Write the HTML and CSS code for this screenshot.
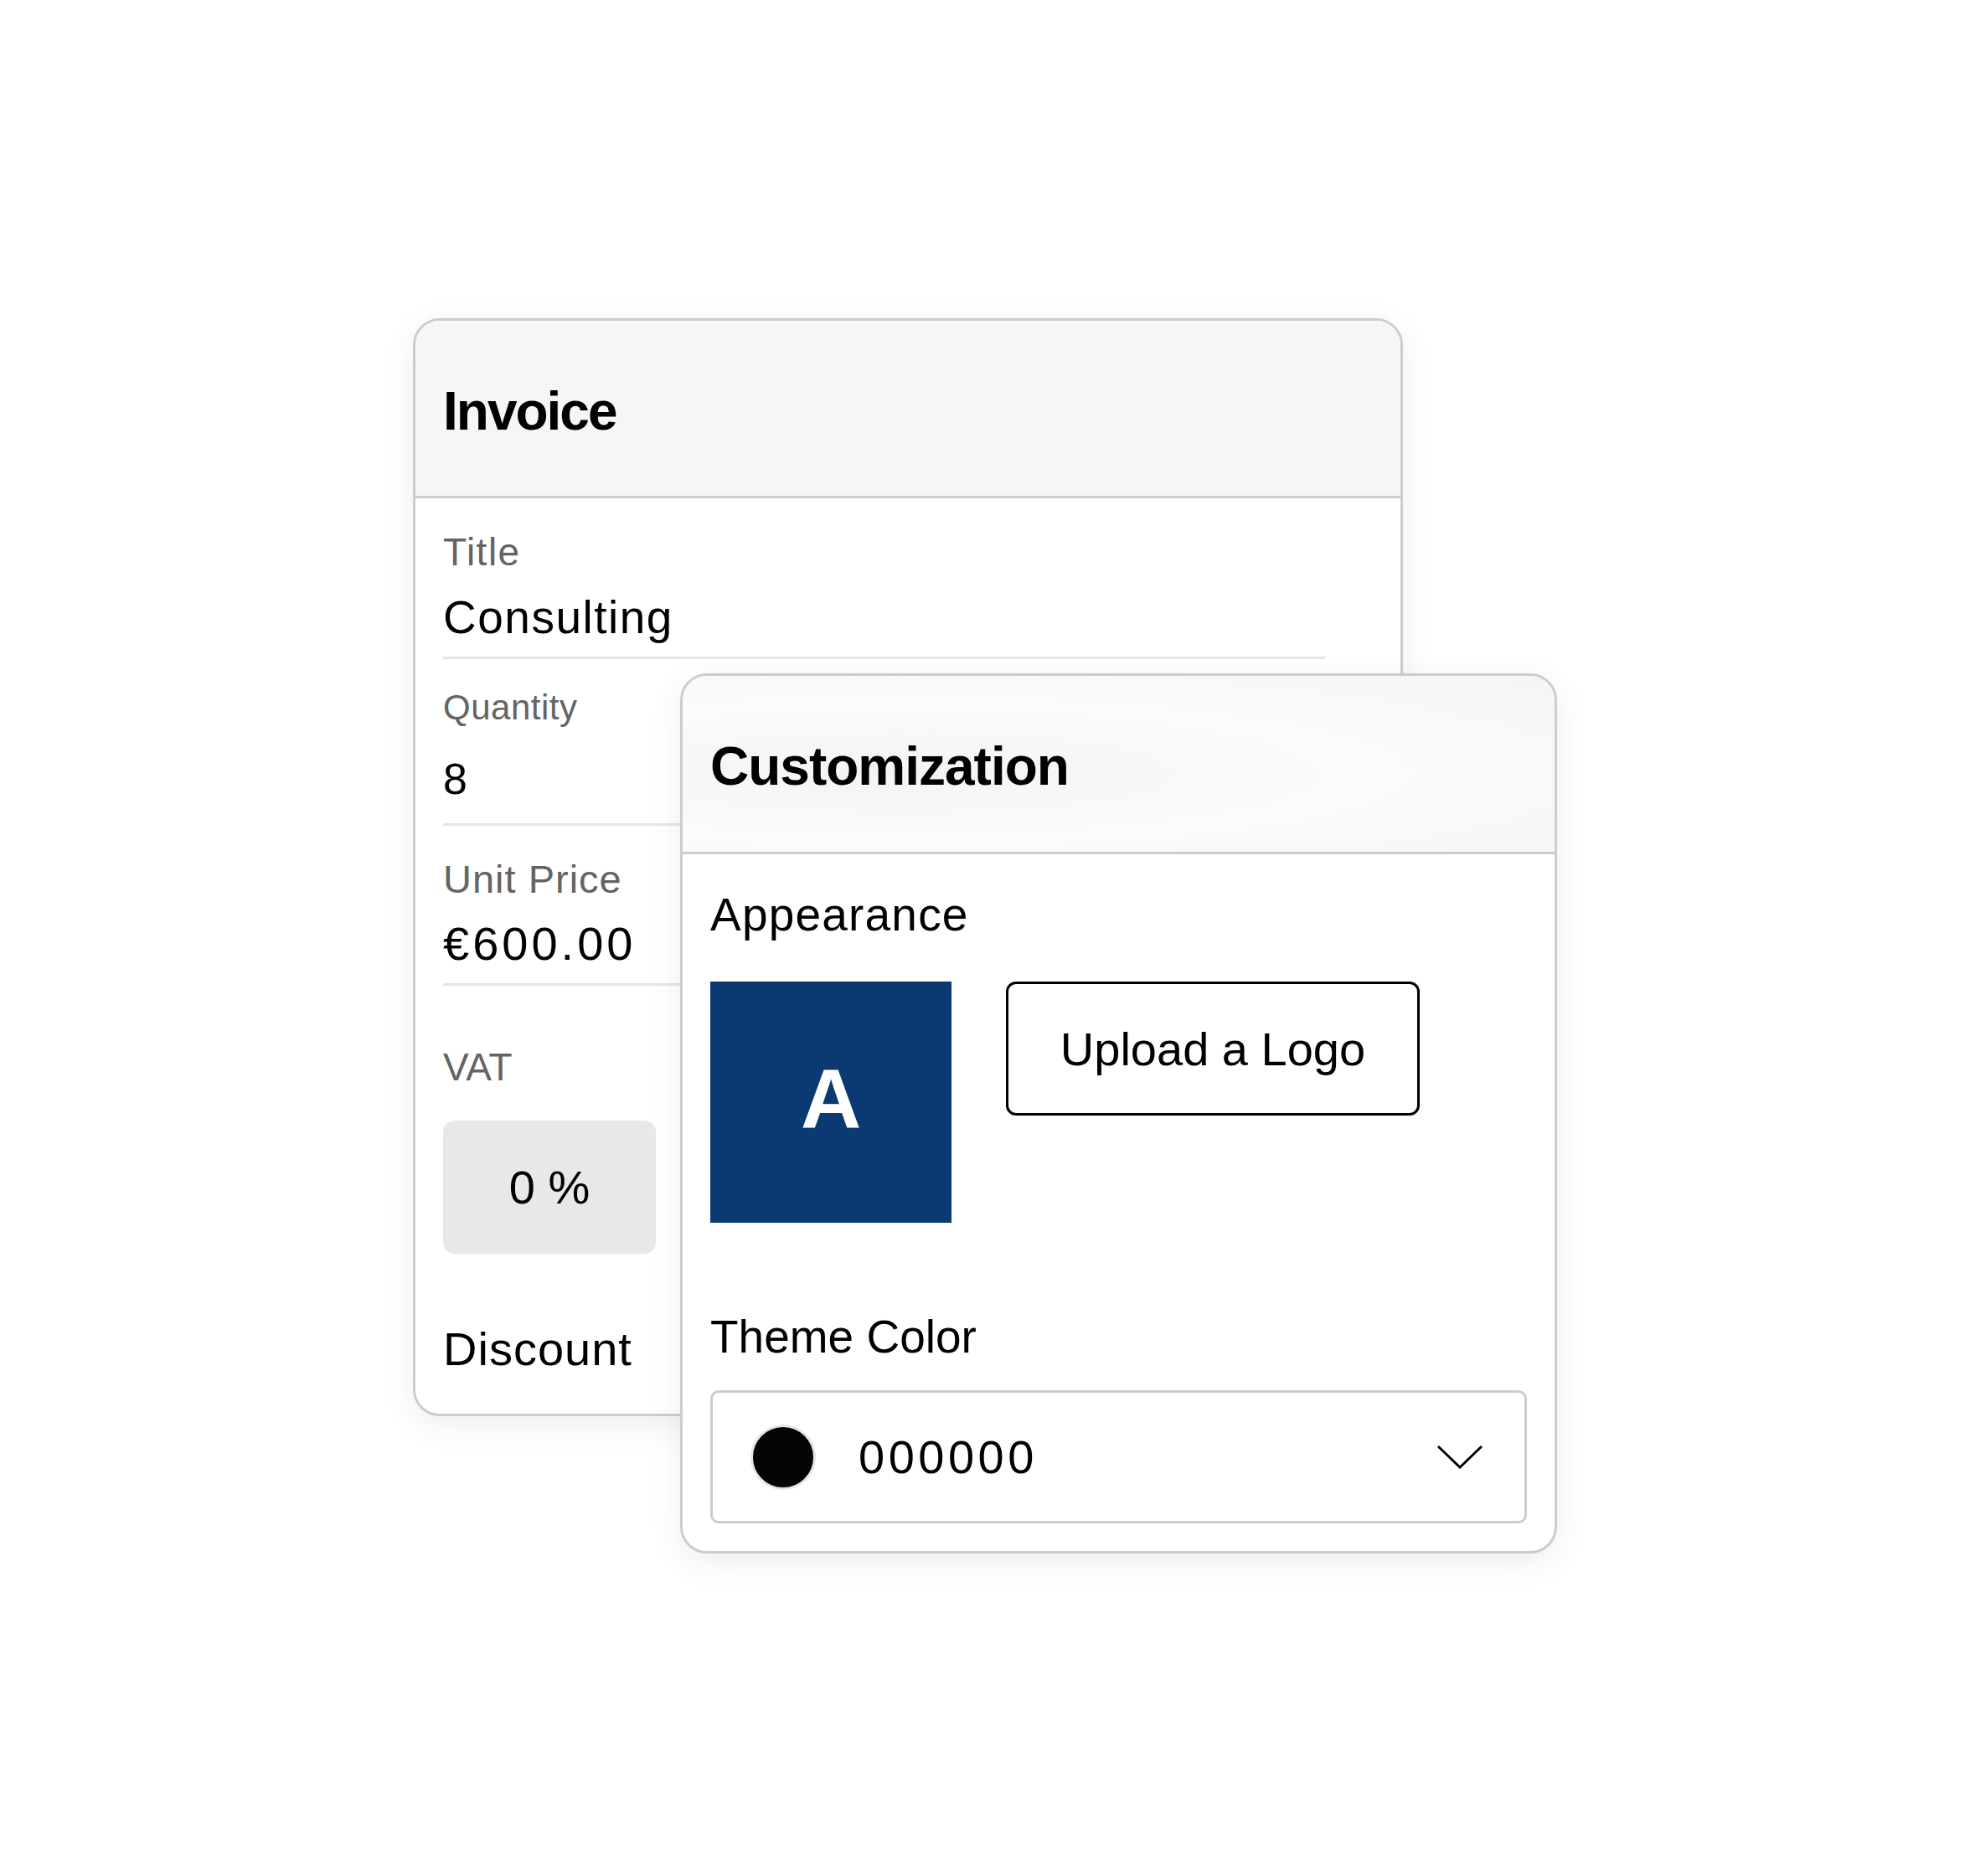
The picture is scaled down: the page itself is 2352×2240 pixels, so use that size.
FILE: index.html
```html
<!DOCTYPE html>
<html lang="en">
<head>
    <meta charset="UTF-8">
    <meta name="viewport" content="width=device-width, initial-scale=1.0">
    <title>Invoice Customization</title>
    <link rel="stylesheet" href="styles.css">
</head>
<body>
    <div class="stage">
        <div class="card invoice">
            <div class="card-head">
                <h2>Invoice</h2>
            </div>
            <div class="card-body">
                <div class="field field-title">
                    <div class="label">Title</div>
                    <div class="value">Consulting</div>
                </div>
                <div class="field field-qty">
                    <div class="label">Quantity</div>
                    <div class="value">8</div>
                </div>
                <div class="field field-price">
                    <div class="label">Unit Price</div>
                    <div class="value">€600.00</div>
                </div>
                <div class="field-vat">
                    <div class="label">VAT</div>
                    <div class="vat-box">0 %</div>
                </div>
                <div class="discount">Discount</div>
            </div>
        </div>

        <div class="card custom">
            <div class="card-head">
                <h2>Customization</h2>
            </div>
            <div class="card-body">
                <div class="section-title">Appearance</div>
                <div class="logo-row">
                    <div class="logo-square">A</div>
                    <button class="upload-btn">Upload a Logo</button>
                </div>
                <div class="section-title theme-title">Theme Color</div>
                <div class="color-select">
                    <span class="swatch"></span>
                    <span class="color-code">000000</span>
                    <svg class="chevron" width="56" height="30" viewBox="0 0 56 30">
                        <polyline points="2,2 28,27 54,2" fill="none" stroke="#000" stroke-width="3"/>
                    </svg>
                </div>
            </div>
        </div>
    </div>
</body>
</html>
```

FILE: styles.css
```css
* {
    box-sizing: border-box;
}
body {
    margin: 0;
    background-color: #ffffff;
    font-family: "Liberation Sans", Arial, sans-serif;
    color: #000;
}
.stage {
    position: relative;
    width: 2352px;
    height: 2240px;
    padding: 380px 0 0 493px;
}
.card {
    background-color: #fff;
    border: 3px solid #cccccc;
    border-radius: 32px;
    box-shadow: 0 10px 40px rgba(0, 0, 0, 0.07);
    overflow: hidden;
}
.card-head {
    height: 212px;
    padding: 76px 33px 0;
    background-color: #f6f6f6;
    border-bottom: 3px solid #cccccc;
}
.card-head h2 {
    margin: 0;
    font-size: 64px;
    line-height: 1;
    font-weight: 700;
    letter-spacing: -1px;
}
.invoice .card-head h2 {
    letter-spacing: -2px;
}
.label {
    color: #646464;
    line-height: 1;
    letter-spacing: 1px;
}
.value {
    line-height: 1;
}

/* invoice card */
.invoice {
    width: 1182px;
    height: 1311px;
}
.invoice .card-body {
    padding: 41px 90px 0 33px;
}
.field {
    border-bottom: 3px solid #e6e6e6;
}
.field-title .label {
    font-size: 46px;
    letter-spacing: 1.5px;
}
.field-title .value {
    margin-top: 28px;
    font-size: 55px;
    letter-spacing: 1.5px;
}
.field-title {
    padding-bottom: 19px;
}
.field-qty {
    margin-top: 37px;
    padding-bottom: 27px;
}
.field-qty .label {
    font-size: 42px;
    letter-spacing: 0.5px;
}
.field-qty .value {
    margin-top: 38px;
    font-size: 52px;
}
.field-price {
    margin-top: 40px;
    padding-bottom: 19px;
}
.field-price .label {
    font-size: 47px;
}
.field-price .value {
    margin-top: 26px;
    font-size: 56px;
    letter-spacing: 4px;
}
.field-vat {
    margin-top: 74px;
}
.field-vat .label {
    font-size: 46px;
    letter-spacing: 0;
}
.vat-box {
    display: flex;
    align-items: center;
    justify-content: center;
    width: 254px;
    height: 159px;
    margin-top: 41px;
    background-color: #e8e8e8;
    border-radius: 14px;
    font-size: 56px;
    line-height: 1;
}
.discount {
    margin-top: 86px;
    font-size: 56px;
    line-height: 1;
    letter-spacing: 1px;
}

/* customization card */
.custom {
    position: absolute;
    left: 812px;
    top: 804px;
    width: 1047px;
    height: 1051px;
}
.custom .card-head {
    height: 213px;
    background: radial-gradient(ellipse at 25% 55%, #f4f4f6 0%, #fbfbfb 50%, #f5f5f5 100%);
}
.custom .card-body {
    padding: 45px 33px 0;
}
.section-title {
    font-size: 55px;
    line-height: 1;
}
.section-title:first-child {
    letter-spacing: 1.2px;
}
.logo-row {
    display: flex;
    gap: 65px;
    margin-top: 52px;
}
.logo-square {
    display: flex;
    align-items: center;
    justify-content: center;
    width: 288px;
    height: 288px;
    padding-bottom: 8px;
    background-color: #0b3a73;
    color: #fff;
    font-size: 100px;
    font-weight: 700;
    line-height: 1;
}
.upload-btn {
    width: 494px;
    height: 160px;
    background-color: #fff;
    border: 3px solid #000;
    border-radius: 12px;
    font-family: inherit;
    font-size: 56px;
    color: #000;
    cursor: pointer;
}
.theme-title {
    margin-top: 109px;
}
.color-select {
    display: flex;
    align-items: center;
    height: 159px;
    margin-top: 36px;
    padding: 0 49px 0 45px;
    border: 3px solid #cccccc;
    border-radius: 10px;
}
.swatch {
    width: 78px;
    height: 78px;
    border-radius: 50%;
    background-color: #050505;
    border: 3px solid #e6e6e6;
}
.color-code {
    margin-left: 51px;
    font-size: 56px;
    letter-spacing: 4.5px;
    line-height: 1;
}
.chevron {
    margin-left: auto;
}
```
